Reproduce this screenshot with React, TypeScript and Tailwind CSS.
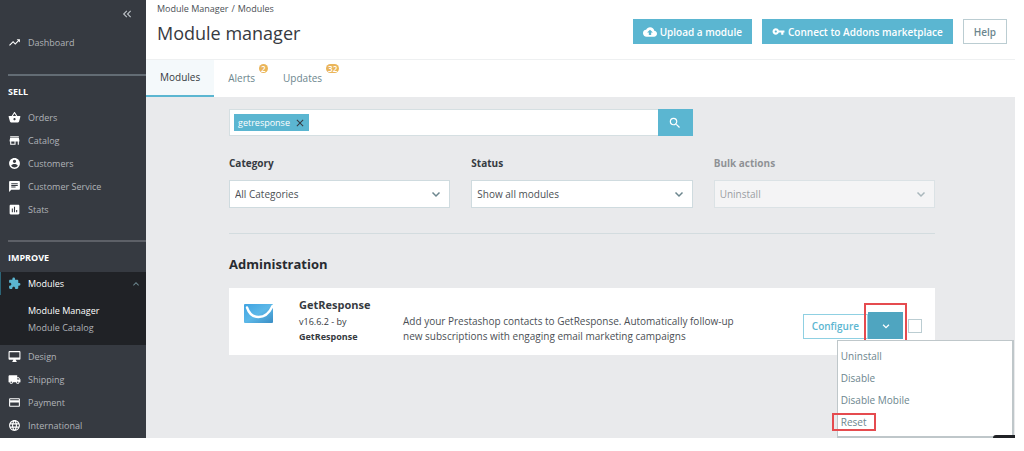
import { useState } from "react";
import type { ComponentType } from "react";
import {
    MdAssessment,
    MdChat,
    MdClose,
    MdCloudUpload,
    MdExtension,
    MdKeyboardArrowUp,
    MdKeyboardDoubleArrowLeft,
    MdLanguage,
    MdLocalShipping,
    MdSearch,
    MdTrendingUp,
} from "react-icons/md";

interface IconProps {
    className?: string;
}

interface NavItem {
    label: string;
    icon: ComponentType<IconProps>;
}

// Iconos rellenos de Material que react-icons solo trae en su versión nueva
const glyph = (d: string) => ({ className }: IconProps) => (
    <svg viewBox="0 0 24 24" fill="currentColor" className={className} aria-hidden="true">
        <path d={d} />
    </svg>
);

const BasketIcon = glyph("M17.21 9l-4.38-6.56c-.19-.28-.51-.42-.83-.42-.32 0-.64.14-.83.43L6.79 9H2c-.55 0-1 .45-1 1 0 .09.01.18.04.27l2.54 9.27c.23.84 1 1.46 1.92 1.46h13c.92 0 1.69-.62 1.93-1.46l2.54-9.27L23 10c0-.55-.45-1-1-1h-4.79zM9 9l3-4.4L15 9H9zm3 8c-1.1 0-2-.9-2-2s.9-2 2-2 2 .9 2 2-.9 2-2 2z");
const StoreIcon = glyph("M20 4H4v2h16V4zm1 10v-2l-1-5H4l-1 5v2h1v6h10v-6h4v6h2v-6h1zm-9 4H6v-4h6v4z");
const AccountIcon = glyph("M12 2C6.48 2 2 6.48 2 12s4.48 10 10 10 10-4.48 10-10S17.52 2 12 2zm0 3c1.66 0 3 1.34 3 3s-1.34 3-3 3-3-1.34-3-3 1.34-3 3-3zm0 14.2c-2.5 0-4.71-1.28-6-3.22.03-1.99 4-3.08 6-3.08 1.99 0 5.97 1.09 6 3.08-1.29 1.94-3.5 3.22-6 3.22z");
const DesktopIcon = glyph("M21 2H3c-1.1 0-2 .9-2 2v12c0 1.1.9 2 2 2h7l-2 3v1h8v-1l-2-3h7c1.1 0 2-.9 2-2V4c0-1.1-.9-2-2-2zm0 12H3V4h18v10z");
const CardIcon = glyph("M20 4H4c-1.11 0-1.99.89-1.99 2L2 18c0 1.11.89 2 2 2h16c1.11 0 2-.89 2-2V6c0-1.11-.89-2-2-2zm0 14H4v-6h16v6zm0-10H4V6h16v2z");
const KeyIcon = glyph("M12.65 10C11.83 7.67 9.61 6 7 6c-3.31 0-6 2.69-6 6s2.69 6 6 6c2.61 0 4.83-1.67 5.65-4H17v4h4v-4h2v-4H12.65zM7 14c-1.1 0-2-.9-2-2s.9-2 2-2 2 .9 2 2-.9 2-2 2z");

const ChevronDown = ({ className }: IconProps) => (
    <svg viewBox="0 0 24 24" fill="none" stroke="currentColor" strokeWidth="3" className={className} aria-hidden="true">
        <path d="M5 9l7 7 7-7" />
    </svg>
);

const sellItems: NavItem[] = [
    { label: "Orders", icon: BasketIcon },
    { label: "Catalog", icon: StoreIcon },
    { label: "Customers", icon: AccountIcon },
    { label: "Customer Service", icon: MdChat },
    { label: "Stats", icon: MdAssessment },
];

const improveItems: NavItem[] = [
    { label: "Design", icon: DesktopIcon },
    { label: "Shipping", icon: MdLocalShipping },
    { label: "Payment", icon: CardIcon },
    { label: "International", icon: MdLanguage },
];

const NavLink = ({ label, icon: Icon }: NavItem) => (
    <a href="#" className="flex h-[23px] items-center gap-[7px] pl-2 text-[#b0b3b8]">
        <Icon className="size-[13px] text-white" />
        {label}
    </a>
);

const Sidebar = () => (
    <nav className="w-[146px] shrink-0 bg-[#363a41] text-[9px] leading-3">
        <div className="flex h-7 items-center justify-end pr-3">
            <button aria-label="Collapse menu" className="text-[#bbc0c6]">
                <MdKeyboardDoubleArrowLeft className="size-[14px]" />
            </button>
        </div>
        <div className="pt-[3px] pb-5">
            <NavLink label="Dashboard" icon={MdTrendingUp} />
        </div>

        <div className="ml-2 border-t-2 border-[#636c74] pt-[10px] pb-2 font-bold text-white">SELL</div>
        {sellItems.map((item) => (
            <NavLink key={item.label} {...item} />
        ))}

        <div className="mt-[19px] ml-2 border-t-2 border-[#5d6067] pt-[10px] pb-2 font-bold text-white">IMPROVE</div>
        <div className="h-[73px] bg-[#202226]">
            <a href="#" className="flex h-[23px] items-center gap-[7px] border-l border-[#2c6577] pr-1 pl-[7px] text-white">
                <MdExtension className="size-[13px] text-[#5bb6d1]" />
                <span className="flex-1">Modules</span>
                <MdKeyboardArrowUp className="size-3 text-[#6c868e]" />
            </a>
            <div className="flex flex-col gap-[5px] pt-[10px] pl-7">
                <a href="#" className="text-white">Module Manager</a>
                <a href="#" className="text-[#b0b3b8]">Module Catalog</a>
            </div>
        </div>
        {improveItems.map((item) => (
            <NavLink key={item.label} {...item} />
        ))}
    </nav>
);

const Header = () => (
    <header className="flex h-[60px] items-start justify-between border-b border-[#eef0f1] pr-2 pl-[11px]">
        <div>
            <div className="flex gap-[3px] pt-[3px] text-[9px] leading-3 text-[#4b4f55]">
                <a href="#">Module Manager</a>
                <span>/</span>
                <a href="#">Modules</a>
            </div>
            <h1 className="pt-[6px] text-[18px] leading-6 text-[#363a41]">Module manager</h1>
        </div>
        <div className="flex gap-[10px] pt-[19px] text-[10px] leading-4 font-semibold">
            <button className="flex h-[25px] items-center gap-[3px] bg-[#5bb6d1] px-[10px] text-white">
                <MdCloudUpload className="size-[14px]" />
                Upload a module
            </button>
            <button className="flex h-[25px] items-center gap-[3px] bg-[#5bb6d1] px-[10px] text-white">
                <KeyIcon className="size-[13px]" />
                Connect to Addons marketplace
            </button>
            <button className="h-[25px] border border-[#bbcdd2] px-[10px] text-[#6c868e]">Help</button>
        </div>
    </header>
);

const Tab = ({ label, count }: { label: string; count?: number }) => (
    <a href="#" className="relative flex h-full items-center px-[14px] text-[#6c868e]">
        {label}
        {count && (
            <span className="absolute top-1 left-[calc(100%-10px)] rounded-full bg-[#eab55a] px-[2px] text-[8px] leading-[9px] font-semibold text-white">
                {count}
            </span>
        )}
    </a>
);

interface FilterProps {
    id: string;
    label: string;
    value: string;
    disabled?: boolean;
}

const Filter = ({ id, label, value, disabled }: FilterProps) => (
    <div className={disabled ? "opacity-50" : ""}>
        <label htmlFor={id} className="block text-[10px] leading-4 font-bold text-[#363a41]">
            {label}
        </label>
        <div className="relative mt-[9px]">
            <select
                id={id}
                disabled={disabled}
                className="block h-7 w-full appearance-none border border-[#cfdbdf] bg-white px-[5px] text-[10px] text-[#4b4f55]"
            >
                <option>{value}</option>
            </select>
            <ChevronDown className="pointer-events-none absolute top-2 right-2 size-3 text-[#6c868e]" />
        </div>
    </div>
);

// Sobre azul de GetResponse
const GetResponseLogo = () => (
    <svg viewBox="0 0 29 19" className="h-[19px] w-[29px]" aria-hidden="true">
        <defs>
            <linearGradient id="envelope" x1="0" y1="0" x2="1" y2="1">
                <stop offset="0" stopColor="#3fa3e2" />
                <stop offset="0.5" stopColor="#5cb8e8" />
                <stop offset="1" stopColor="#3a8dc4" />
            </linearGradient>
        </defs>
        <rect width="29" height="19" rx="1" fill="url(#envelope)" />
        <path d="M3 3.500C5 9.500 9 13 14.500 13C20.500 13 25.500 9 28.500 2" fill="none" stroke="#fff" strokeWidth="2.400" strokeLinecap="round" />
    </svg>
);

const menuActions = ["Uninstall", "Disable", "Disable Mobile", "Reset"];

const ModuleCard = () => {
    const [open, setOpen] = useState(true);

    return (
        <article className="mt-[15px] flex h-[67px] bg-white pr-[13px] pl-[15px] text-[#363a41]">
            <div className="w-[55px] shrink-0 pt-4">
                <GetResponseLogo />
            </div>
            <div className="w-[104px] shrink-0 pt-[9px]">
                <h3 className="text-[11px] leading-4 font-bold">GetResponse</h3>
                <p className="pt-[1px] text-[9px] leading-[15px]">
                    v16.6.2 - by
                    <b className="block">GetResponse</b>
                </p>
            </div>
            <p className="flex-1 pt-[26px] text-[10px] leading-[15px] text-[#4b4f55]">
                <span className="block max-w-[340px]">
                    Add your Prestashop contacts to GetResponse. Automatically follow-up new subscriptions with engaging email marketing campaigns
                </span>
            </p>
            <div className="relative mt-6 flex h-[27px] items-end">
                <button className="h-[25px] border border-[#8fd0e2] px-2 text-[10px] font-semibold text-[#5bb6d1]">Configure</button>
                <button
                    aria-label="More actions"
                    aria-expanded={open}
                    onClick={() => setOpen(!open)}
                    className="relative flex h-[27px] w-[35px] items-center justify-center bg-[#4fa5c0] text-white"
                >
                    <ChevronDown className="size-[10px]" />
                    <span className="absolute -inset-x-1 -top-[9px] -bottom-[3px] border-2 border-[#e54b4f]" />
                </button>
                <input
                    type="checkbox"
                    aria-label="Select GetResponse"
                    className="mb-[6px] ml-[5px] size-[14px] appearance-none border border-[#bbcdd2] bg-white"
                />
                {open && (
                    <ul className="absolute top-full left-[34px] mt-[1px] w-[177px] border border-r-2 border-b-2 border-[#bfc7ca] bg-white pt-1 pb-[3px] text-[10px] text-[#6c868e]">
                        {menuActions.map((action) => (
                            <li key={action} className="flex h-[22px] items-center pl-[3px]">
                                <button className={action === "Reset" ? "-ml-[9px] h-[18px] border-2 border-[#e54b4f] px-[7px] leading-3" : ""}>
                                    {action}
                                </button>
                            </li>
                        ))}
                    </ul>
                )}
            </div>
        </article>
    );
};

export default function App() {
    return (
        <div className="flex min-h-screen bg-white pr-[9px] pb-[13px] font-['Open_Sans',sans-serif]">
            <Sidebar />
            <main className="relative flex min-w-0 flex-1 flex-col">
                <Header />
                <div className="flex h-[37px] text-[10px]">
                    <a href="#" className="flex items-center border-b-2 border-[#5bb6d1] bg-[#f4f9fb] px-[14px] text-[#363a41]">
                        Modules
                    </a>
                    <Tab label="Alerts" count={2} />
                    <Tab label="Updates" count={32} />
                </div>

                <div className="flex-1 bg-[#e9eaec] pt-3 pr-20 pl-[83px]">
                    <div className="grid grid-cols-3 gap-x-[21px] gap-y-[19px]">
                        <form className="col-span-2 flex h-[27px]" onSubmit={(e) => e.preventDefault()}>
                            <div className="flex flex-1 items-center border border-r-0 border-[#d5dfe2] bg-white pl-1">
                                <span className="flex h-[17px] items-center gap-1 bg-[#5bb6d1] pr-[3px] pl-1 text-[9px] text-white">
                                    getresponse
                                    <button type="button" aria-label="Remove getresponse" className="text-[#363a41]">
                                        <MdClose className="size-3" />
                                    </button>
                                </span>
                                <input aria-label="Search modules" className="h-full min-w-0 flex-1 px-1 text-[10px] outline-none" />
                            </div>
                            <button aria-label="Search" className="flex w-[35px] items-center justify-center bg-[#5bb6d1] text-white">
                                <MdSearch className="size-[14px]" />
                            </button>
                        </form>
                        <div />
                        <Filter id="category" label="Category" value="All Categories" />
                        <Filter id="status" label="Status" value="Show all modules" />
                        <Filter id="bulk" label="Bulk actions" value="Uninstall" disabled />
                    </div>
                    <hr className="mt-[25px] border-[#d3dcdf]" />
                    <h2 className="mt-[21px] text-[13px] leading-[18px] font-bold text-[#282b30]">Administration</h2>
                    <ModuleCard />
                </div>
                <div className="absolute right-0 bottom-0 h-[3px] w-[22px] rounded-tl-sm bg-[#202226]" />
            </main>
        </div>
    );
}
